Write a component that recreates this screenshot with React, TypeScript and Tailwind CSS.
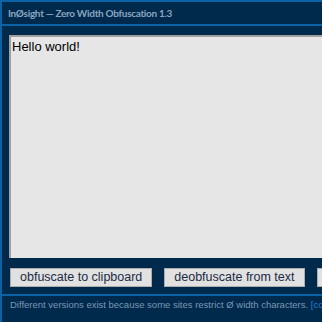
import React from 'react';

const buttons = ['obfuscate to clipboard', 'deobfuscate from text', 'copy'];

export default function App() {
    return (
        <div className="w-[322px] h-[322px] overflow-hidden bg-[#002a4b] border-t-2 border-l-2 border-[#0b63a5]">
            <div className="h-[24px] flex items-center pl-[6px] border-b-2 border-[#0b63a5]">
                <span className="text-[10px] tracking-[-0.3px] font-bold text-[#8aa5c0] whitespace-nowrap" style={{ fontFamily: 'Lato, "Open Sans", sans-serif' }}>
                    InØsight — Zero Width Obfuscation 1.3
                </span>
            </div>

            <div className="pl-[7px] pt-[9px]">
                <textarea
                    defaultValue="Hello world!"
                    className="block w-[360px] h-[223px] resize-none bg-[#e6e6e6] text-black text-[13px] leading-[16px] pl-[1px] pt-[2px] border-t-2 border-l-2 border-[#a0a0a0] outline-none"
                    style={{ fontFamily: '"Liberation Sans", Arial, sans-serif' }}
                />
            </div>

            <div className="flex gap-[12px] pl-[8px] pt-[10px] pb-[7px] whitespace-nowrap">
                {buttons.map((b) => (
                    <button
                        key={b}
                        className="shrink-0 h-[19px] px-[9px] bg-[#e1e1e1] border border-[#adadad] text-[#1c2a45] text-[12.5px] leading-[17px]"
                        style={{ fontFamily: '"Liberation Sans", Arial, sans-serif' }}
                    >
                        {b}
                    </button>
                ))}
            </div>

            <div className="border-t-2 border-[#0b63a5] pl-[8px] pt-[2px]">
                <p className="text-[9.5px] leading-[14px] text-[#7b98b6] whitespace-nowrap" style={{ fontFamily: '"Liberation Sans", Arial, sans-serif' }}>
                    Different versions exist because some sites restrict Ø width characters. <span className="text-[#1a7fd4]">[copy]</span>
                </p>
            </div>
        </div>
    );
}
